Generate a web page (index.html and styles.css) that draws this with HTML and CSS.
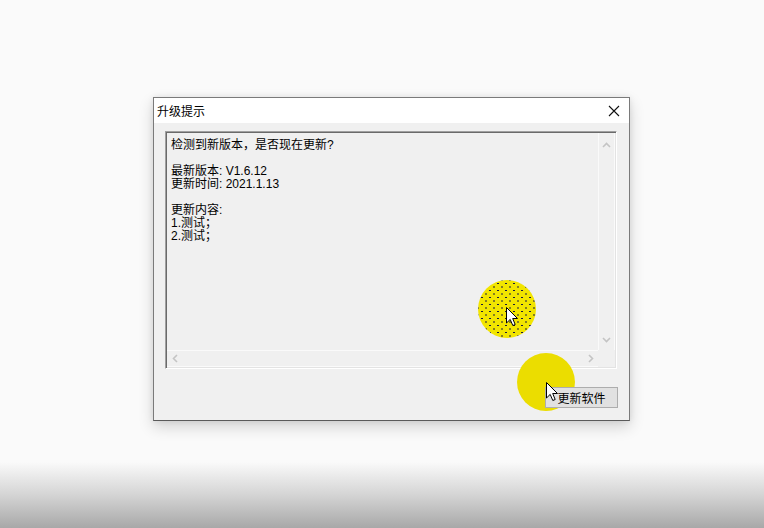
FILE: index.html
```html
<!DOCTYPE html>
<html lang="zh-CN">
<head>
<meta charset="utf-8">
<title>升级提示</title>
<link rel="stylesheet" href="styles.css">
</head>
<body>
<div class="window">
  <div class="titlebar">
    <span class="title">升级提示</span>
    <span class="close" aria-label="关闭">
      <svg width="12" height="12" viewBox="0 0 12 12"><path d="M1 1 L11 11 M11 1 L1 11" stroke="#111" stroke-width="1.1" fill="none"/></svg>
    </span>
  </div>
  <div class="body">
    <div class="textbox">
      <div class="text">检测到新版本，是否现在更新?<br><br>最新版本: V1.6.12<br>更新时间: 2021.1.13<br><br>更新内容:<br>1.测试；<br>2.测试；</div>
      <div class="vscroll">
        <svg width="9" height="6" viewBox="0 0 9 6"><path d="M1 5 L4.5 1.5 L8 5" stroke="#c4c4c4" stroke-width="1.6" fill="none"/></svg>
        <svg width="9" height="6" viewBox="0 0 9 6"><path d="M1 1 L4.5 4.5 L8 1" stroke="#c4c4c4" stroke-width="1.6" fill="none"/></svg>
      </div>
      <div class="hscroll">
        <svg width="6" height="9" viewBox="0 0 6 9"><path d="M5 1 L1.5 4.5 L5 8" stroke="#c4c4c4" stroke-width="1.6" fill="none"/></svg>
        <svg width="6" height="9" viewBox="0 0 6 9"><path d="M1 1 L4.5 4.5 L1 8" stroke="#c4c4c4" stroke-width="1.6" fill="none"/></svg>
      </div>
      <div class="corner"></div>
      <div class="spot spot-dotted">
        <svg class="cursor" width="13" height="20" viewBox="0 0 13 20"><path d="M0.5 0.5 L0.5 16 L4.2 12.4 L6.8 18.5 L9.2 17.5 L6.7 11.5 L11.5 11.5 Z" fill="#fff" stroke="#000" stroke-width="1"/></svg>
      </div>
    </div>
    <div class="actions">
      <div class="spot spot-solid"></div>
      <button class="btn">更新软件</button>
      <svg class="cursor cursor2" width="13" height="20" viewBox="0 0 13 20"><path d="M0.5 0.5 L0.5 16 L4.2 12.4 L6.8 18.5 L9.2 17.5 L6.7 11.5 L11.5 11.5 Z" fill="#fff" stroke="#000" stroke-width="1"/></svg>
    </div>
  </div>
</div>
</body>
</html>
```

FILE: styles.css
```css
html, body {
  margin: 0;
  padding: 0;
}
body {
  width: 764px;
  height: 528px;
  overflow: hidden;
  font-family: "Liberation Sans", "Noto Sans CJK SC", sans-serif;
  font-size: 12px;
  color: #000;
  background: linear-gradient(to bottom, #fafafa 0, #fafafa 462px, #f1f1f1 470px, #d4d4d4 495px, #a8a8a8 528px);
  display: flex;
  flex-direction: column;
  align-items: flex-start;
}
.window {
  margin: 97px 0 0 153px;
  width: 475px;
  height: 322px;
  border: 1px solid #7a7a7a;
  border-bottom-color: #5a5a5a;
  background: #f0f0f0;
  display: flex;
  flex-direction: column;
  box-shadow: 0 6px 14px rgba(0,0,0,0.16), 0 0 6px rgba(0,0,0,0.08);
}
.titlebar {
  height: 25px;
  background: #fff;
  display: flex;
  align-items: center;
  justify-content: space-between;
  padding: 0 9px 0 3px;
}
.title {
  font-family: "Noto Sans CJK SC", sans-serif;
  font-size: 12px;
  line-height: 14px;
}
.close {
  display: flex;
  width: 12px;
  height: 12px;
}
.body {
  flex: 1;
  display: flex;
  flex-direction: column;
  padding: 8px 12px 0 11px;
}
.textbox {
  position: relative;
  height: 234px;
  border-style: solid;
  border-width: 1px;
  border-color: #a0a0a0 #fff #fff #a0a0a0;
  box-shadow: inset 1px 1px 0 #6a6a6a, inset -1px -1px 0 #e3e3e3;
  padding: 1px;
  display: grid;
  grid-template-columns: 1fr 17px;
  grid-template-rows: 1fr 17px;
  background: #f0f0f0;
}
.text {
  padding: 6px 4px 0;
  line-height: 13px;
  font-size: 12px;
  font-family: "Liberation Sans", "Noto Sans CJK SC", sans-serif;
  white-space: nowrap;
  overflow: hidden;
}
.vscroll {
  display: flex;
  flex-direction: column;
  justify-content: space-between;
  align-items: center;
  padding: 9px 0 7px;
  border-left: 1px solid #fafafa;
  border-right: 1px solid #fafafa;
  background: #f0f0f0;
}
.hscroll {
  display: flex;
  justify-content: space-between;
  align-items: center;
  padding: 0 4px 0 5px;
  border-top: 1px solid #fafafa;
  border-bottom: 1px solid #fafafa;
  background: #f0f0f0;
}
.corner {
  background: #f0f0f0;
}
.spot {
  position: absolute;
  width: 58px;
  height: 58px;
  border-radius: 50%;
}
.spot-dotted {
  left: 312px;
  top: 148px;
  background-color: #f2e500;
  background-image:
    radial-gradient(circle, #1a1a40 0.5px, transparent 0.8px),
    radial-gradient(circle, #1a1a40 0.5px, transparent 0.8px);
  background-size: 8px 7px, 8px 7px;
  background-position: 0 0, 4px 3.5px;
}
.spot-dotted .cursor {
  position: absolute;
  left: 28px;
  top: 27px;
}
.actions {
  position: relative;
  display: flex;
  justify-content: flex-end;
  padding-top: 18px;
}
.spot-solid {
  left: 352px;
  top: -16px;
  background: #ebdd00;
}
.btn {
  position: relative;
  width: 73px;
  height: 21px;
  margin-right: -1px;
  padding: 0;
  background: #e1e1e1;
  border: 1px solid #adadad;
  font-family: "Noto Sans CJK SC", sans-serif;
  font-size: 12px;
  line-height: 19px;
  color: #000;
}
.cursor2 {
  position: absolute;
  left: 381px;
  top: 13px;
}
```
